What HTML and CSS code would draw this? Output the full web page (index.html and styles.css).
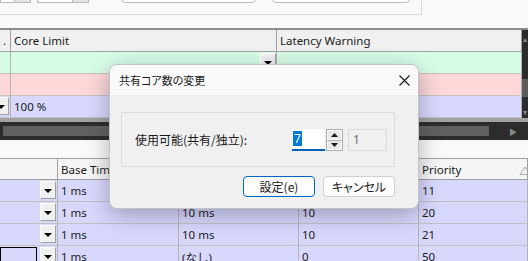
FILE: index.html
```html
<!DOCTYPE html>
<html lang="ja">
<head>
  <meta charset="UTF-8" />
  <title>共有コア数の変更</title>
  <link rel="stylesheet" href="styles.css">
</head>
<body>
  <div class="screen">

    <div class="toolbar">
      <div class="group">
        <div class="spin spin-a"><span class="spin-btn"></span></div>
        <div class="spin spin-b"><span class="spin-btn"></span></div>
        <div class="combo combo-a"></div>
        <div class="combo combo-b"></div>
      </div>
    </div>

    <div class="upper">
      <div class="upper-grid">
        <div class="hcell">.</div>
        <div class="hcell">Core Limit</div>
        <div class="hcell">Latency Warning</div>

        <div class="cell green"></div>
        <div class="cell green"><span class="drop"></span></div>
        <div class="cell green"></div>

        <div class="cell pink"></div>
        <div class="cell pink"></div>
        <div class="cell pink"></div>

        <div class="cell blue"><span class="drop"></span></div>
        <div class="cell blue">100 %</div>
        <div class="cell blue"></div>
      </div>
      <div class="vscroll">
        <span class="vs-arrow">▴</span>
        <span class="vs-thumb"></span>
        <span class="vs-arrow">▾</span>
      </div>
    </div>
    <div class="hs-band"></div>
    <div class="hscroll">
      <span class="hs-thumb"></span>
      <span class="hs-arrow">▶</span>
    </div>

    <div class="gap"></div>

    <div class="lower">
      <div class="hcell"></div>
      <div class="hcell">Base Time</div>
      <div class="hcell"></div>
      <div class="hcell"></div>
      <div class="hcell">Priority<svg class="sort" width="12" height="9" viewBox="0 0 12 9"><path d="M1 8.5 L6 1 L11 8.5 Z" fill="none" stroke="#a8a8a8" stroke-width="1"/></svg></div>

      <div class="cell blue"><span class="drop"></span></div>
      <div class="cell blue">1 ms</div>
      <div class="cell blue"></div>
      <div class="cell blue"></div>
      <div class="cell blue">11</div>

      <div class="cell blue"><span class="drop"></span></div>
      <div class="cell blue">1 ms</div>
      <div class="cell blue">10 ms</div>
      <div class="cell blue">10</div>
      <div class="cell blue">20</div>

      <div class="cell blue"><span class="drop"></span></div>
      <div class="cell blue">1 ms</div>
      <div class="cell blue">10 ms</div>
      <div class="cell blue">10</div>
      <div class="cell blue">21</div>

      <div class="cell blue"><span class="edit"></span><span class="drop"></span></div>
      <div class="cell blue">1 ms</div>
      <div class="cell blue">(なし)</div>
      <div class="cell blue">0</div>
      <div class="cell blue">50</div>
    </div>

    <div class="dialog">
      <div class="dlg-title">
        <span>共有コア数の変更</span>
        <svg class="close" width="11" height="11" viewBox="0 0 11 11"><path d="M0.5 0.5 L10.5 10.5 M10.5 0.5 L0.5 10.5" stroke="#1a1a1a" stroke-width="1.1"/></svg>
      </div>
      <div class="dlg-body">
        <div class="dlg-group">
          <span class="dlg-label">使用可能(共有/独立):</span>
          <div class="num-input"><span class="sel">7</span></div>
          <div class="num-spin">
            <span class="num-btn"><svg width="7" height="4" viewBox="0 0 7 4"><path d="M0 4 L3.5 0 L7 4 Z" fill="#1a1a1a"/></svg></span>
            <span class="num-btn"><svg width="7" height="4" viewBox="0 0 7 4"><path d="M0 0 L3.5 4 L7 0 Z" fill="#1a1a1a"/></svg></span>
          </div>
          <div class="num-readonly">1</div>
        </div>
        <div class="dlg-buttons">
          <button class="btn btn-default">設定(e)</button>
          <button class="btn">キャンセル</button>
        </div>
      </div>
    </div>

  </div>
</body>
</html>
```

FILE: styles.css
```css
body {
  margin: 0;
  padding: 0;
  font-family: "Noto Sans", "Noto Sans CJK JP", sans-serif;
  font-size: 11.5px;
  color: #1a1a1a;
  background-color: #f9f9f9;
}

.screen {
  position: relative;
  width: 528px;
  height: 261px;
  overflow: hidden;
  display: flex;
  flex-direction: column;
}

/* top settings strip */
.toolbar {
  height: 28px;
  flex-shrink: 0;
}

.toolbar .group {
  width: 422px;
  height: 15px;
  box-sizing: border-box;
  border-right: 1px solid #dadada;
  border-bottom: 1px solid #dadada;
  display: flex;
  align-items: flex-start;
}

.spin {
  height: 22px;
  margin-top: -19px;
  box-sizing: border-box;
  border: 1px solid #b8b8b8;
  background: #fff;
  display: flex;
  justify-content: flex-end;
}

.spin-btn {
  background: #e6e6e6;
  border-left: 1px solid #b8b8b8;
}

.spin-a { width: 31px; }
.spin-a .spin-btn { width: 15px; }
.spin-b { width: 52px; margin-left: 6px; }
.spin-b .spin-btn { width: 15px; }

.combo {
  height: 22px;
  margin-top: -19px;
  box-sizing: border-box;
  border: 1px solid #bcbcbc;
  border-radius: 4px;
  background: #fdfdfd;
}

.combo-a { width: 135px; margin-left: 32px; }
.combo-b { width: 138px; margin-left: 16px; }

/* upper grid */
.upper {
  display: flex;
  border-top: 2px solid #8c8c8c;
  flex-shrink: 0;
  height: 88px;
  overflow: hidden;
}

.upper-grid {
  flex: 1;
  display: grid;
  grid-template-columns: 11px 266px 1fr;
  grid-auto-rows: 22px;
}

.hcell {
  height: 22px;
  box-sizing: border-box;
  background: #f0f0f0;
  border-right: 1px solid #a0a0a0;
  border-bottom: 1px solid #a0a0a0;
  padding-left: 3px;
  display: flex;
  align-items: center;
  white-space: nowrap;
  overflow: hidden;
  position: relative;
}

.cell {
  height: 22px;
  box-sizing: border-box;
  border-right: 1px solid #b4b4b4;
  border-bottom: 1px solid #c2c2c2;
  padding-left: 3px;
  display: flex;
  align-items: center;
  white-space: nowrap;
  overflow: hidden;
  position: relative;
}

.green { background: #d7fce6; }
.pink { background: #fcd8d8; }
.blue { background: #d8d8fc; }

.drop {
  margin-left: auto;
  width: 16px;
  height: 18px;
  flex-shrink: 0;
  box-sizing: border-box;
  align-self: flex-start;
  margin-top: 1px;
  background: #f0f0f0;
  border: 1px solid;
  border-color: #fff #a0a0a0 #a0a0a0 #fff;
  position: relative;
}

.drop::after {
  content: "";
  position: absolute;
  left: 3px;
  top: 7px;
  border-left: 4px solid transparent;
  border-right: 4px solid transparent;
  border-top: 4px solid #000;
}

.upper .cell:first-child,
.upper-grid .cell:nth-child(10) {
  padding-left: 0;
}

.upper-grid .cell:nth-child(10) .drop {
  margin-left: -7px;
}

.vscroll {
  width: 6px;
  background: #2c2c2c;
  display: flex;
  flex-direction: column;
  align-items: center;
  color: #8a8a8a;
  font-size: 8px;
  line-height: 8px;
  padding: 5px 0 2px;
  box-sizing: border-box;
}

.vs-thumb {
  width: 6px;
  height: 18px;
  background: #5c5c5c;
  margin: 36px 0 auto;
  align-self: flex-end;
}

.hs-band {
  height: 4px;
  background: #a2a2a2;
  flex-shrink: 0;
}

.hscroll {
  height: 18px;
  background: #2c2c2c;
  display: flex;
  align-items: center;
  flex-shrink: 0;
}

.hs-thumb {
  width: 486px;
  height: 10px;
  margin-left: 3px;
  background: #606060;
}

.hs-arrow {
  margin-left: 20px;
  font-size: 8px;
  color: #8a8a8a;
}

.gap {
  height: 18px;
  flex-shrink: 0;
}

/* lower grid */
.lower {
  display: grid;
  grid-template-columns: 58px 121px 120px 120px 1fr;
  border-top: 1px solid #a0a0a0;
}

.lower .hcell {
  height: 21px;
  background: #f5f5f5;
}

.lower .cell:nth-child(5n+1) {
  padding-left: 0;
}

.lower .drop {
  margin-right: 1px;
}

.sort {
  position: absolute;
  left: 100px;
  top: 7px;
}

.edit {
  width: 39px;
  height: 22px;
  box-sizing: border-box;
  border: 1px solid #000;
  align-self: flex-start;
  margin-top: 1px;
}

.lower .cell .edit + .drop {
  margin-left: 3px;
}

/* dialog */
.dialog {
  position: absolute;
  left: 109px;
  top: 64px;
  width: 310px;
  height: 145px;
  box-sizing: border-box;
  border: 1px solid #c4c4c4;
  border-radius: 8px;
  background: #f0f0f0;
  overflow: hidden;
  box-shadow: 0 6px 22px rgba(40, 40, 70, 0.35);
  font-family: "Noto Sans CJK JP", sans-serif;
  font-feature-settings: "palt";
}

.dlg-title {
  height: 30px;
  background: #f9f9f9;
  display: flex;
  align-items: center;
  justify-content: space-between;
  padding: 0 8px 0 9px;
  font-size: 11px;
}

.dlg-body {
  padding: 17px 23px 0 11px;
}

.dlg-group {
  height: 55px;
  box-sizing: border-box;
  border: 1px solid #dcdcdc;
  display: flex;
  align-items: center;
  padding-left: 13px;
}

.dlg-label {
  font-size: 12px;
  width: 157px;
}

.num-input {
  width: 33px;
  height: 22px;
  box-sizing: border-box;
  background: #fff;
  border-bottom: 2px solid #005fb8;
  display: flex;
  align-items: center;
  padding-left: 1px;
  font-family: "Noto Sans", sans-serif;
  font-size: 12px;
}

.sel {
  background: #0078d7;
  color: #fff;
  padding: 0 1px;
  line-height: 15px;
}

.num-spin {
  width: 17px;
  height: 22px;
  box-sizing: border-box;
  border: 1px solid #adadad;
  margin-left: 1px;
  display: flex;
  flex-direction: column;
}

.num-btn {
  flex: 1;
  background: #e8e8e8;
  border: 1px solid #fafafa;
  display: flex;
  align-items: center;
  justify-content: center;
}

.num-btn + .num-btn {
  border-top-color: #adadad;
}

.num-readonly {
  width: 39px;
  height: 22px;
  box-sizing: border-box;
  margin-left: 5px;
  border: 1px solid #dadada;
  color: #6d6d6d;
  padding-left: 4px;
  display: flex;
  align-items: center;
  font-family: "Noto Sans", sans-serif;
  font-size: 12px;
}

.dlg-buttons {
  display: flex;
  justify-content: flex-end;
  gap: 8px;
  margin-top: 9px;
}

.btn {
  width: 72px;
  height: 21px;
  box-sizing: border-box;
  border: 1px solid #d0d0d0;
  border-radius: 4px;
  background: #fdfdfd;
  font-family: "Noto Sans CJK JP", sans-serif;
  font-feature-settings: "palt";
  font-size: 12px;
  color: #1a1a1a;
  padding: 0;
  line-height: 19px;
}

.btn-default {
  border: 1.5px solid #0067c0;
}
```
